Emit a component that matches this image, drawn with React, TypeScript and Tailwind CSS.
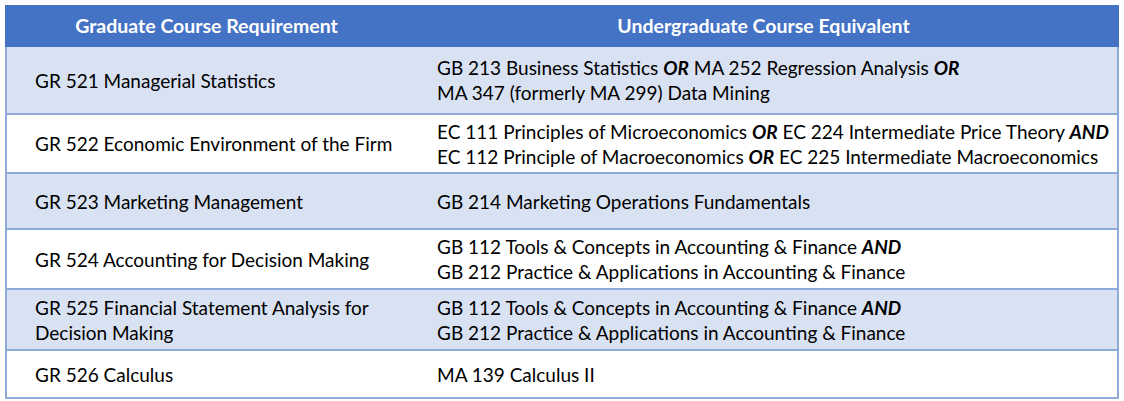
type Part = { text: string; bold?: boolean }

interface Row {
  course: string
  equivalent: Part[][]
  height: string
  shaded: boolean
}

const OR = { text: 'OR', bold: true }
const AND = { text: 'AND', bold: true }

const ROWS: Row[] = [
  {
    course: 'GR 521 Managerial Statistics',
    equivalent: [
      [{ text: 'GB 213 Business Statistics ' }, OR, { text: ' MA 252 Regression Analysis ' }, OR],
      [{ text: 'MA 347 (formerly MA 299) Data Mining' }],
    ],
    height: 'h-[66px]',
    shaded: true,
  },
  {
    course: 'GR 522 Economic Environment of the Firm',
    equivalent: [
      [
        { text: 'EC 111 Principles of Microeconomics ' },
        OR,
        { text: ' EC 224 Intermediate Price Theory ' },
        AND,
      ],
      [
        { text: 'EC 112 Principle of Macroeconomics ' },
        OR,
        { text: ' EC 225 Intermediate Macroeconomics' },
      ],
    ],
    height: 'h-[59px]',
    shaded: false,
  },
  {
    course: 'GR 523 Marketing Management',
    equivalent: [[{ text: 'GB 214 Marketing Operations Fundamentals' }]],
    height: 'h-[56px]',
    shaded: true,
  },
  {
    course: 'GR 524 Accounting for Decision Making',
    equivalent: [
      [{ text: 'GB 112 Tools & Concepts in Accounting & Finance ' }, AND],
      [{ text: 'GB 212 Practice & Applications in Accounting & Finance' }],
    ],
    height: 'h-[60px]',
    shaded: false,
  },
  {
    course: 'GR 525 Financial Statement Analysis for Decision Making',
    equivalent: [
      [{ text: 'GB 112 Tools & Concepts in Accounting & Finance ' }, AND],
      [{ text: 'GB 212 Practice & Applications in Accounting & Finance' }],
    ],
    height: 'h-[61px]',
    shaded: true,
  },
  {
    course: 'GR 526 Calculus',
    equivalent: [[{ text: 'MA 139 Calculus II' }]],
    height: 'h-[50px]',
    shaded: false,
  },
]

export default function App() {
  return (
    <div className="min-h-screen bg-white p-[5px] font-['Lato','Liberation_Sans',sans-serif] text-[19px] text-black">
      <div className="w-[1114px]">
        <div className="grid h-[42px] grid-cols-[403px_711px] items-center bg-[#4472C4] text-[19.5px] font-bold text-white">
          <div className="text-center">Graduate Course Requirement</div>
          <div className="text-center">Undergraduate Course Equivalent</div>
        </div>

        <div className="border-x-2 border-[#8EAADB]">
          {ROWS.map((row, i) => (
            <div
              key={row.course}
              className={`grid grid-cols-[401px_709px] items-center border-[#8EAADB] ${row.height} ${
                row.shaded ? 'bg-[#D9E2F3]' : 'bg-white'
              } ${i > 0 ? 'border-t-2' : ''} ${i === ROWS.length - 1 ? 'border-b-2' : ''}`}
            >
              <div className="pl-[28px] leading-[25px]">{row.course}</div>
              <div className="pl-[29px] leading-[25px]">
                {row.equivalent.map((line, j) => (
                  <div key={j}>
                    {line.map((p, k) =>
                      p.bold ? (
                        <b key={k} className="font-bold italic">
                          {p.text}
                        </b>
                      ) : (
                        <span key={k}>{p.text}</span>
                      )
                    )}
                  </div>
                ))}
              </div>
            </div>
          ))}
        </div>
      </div>
    </div>
  )
}
